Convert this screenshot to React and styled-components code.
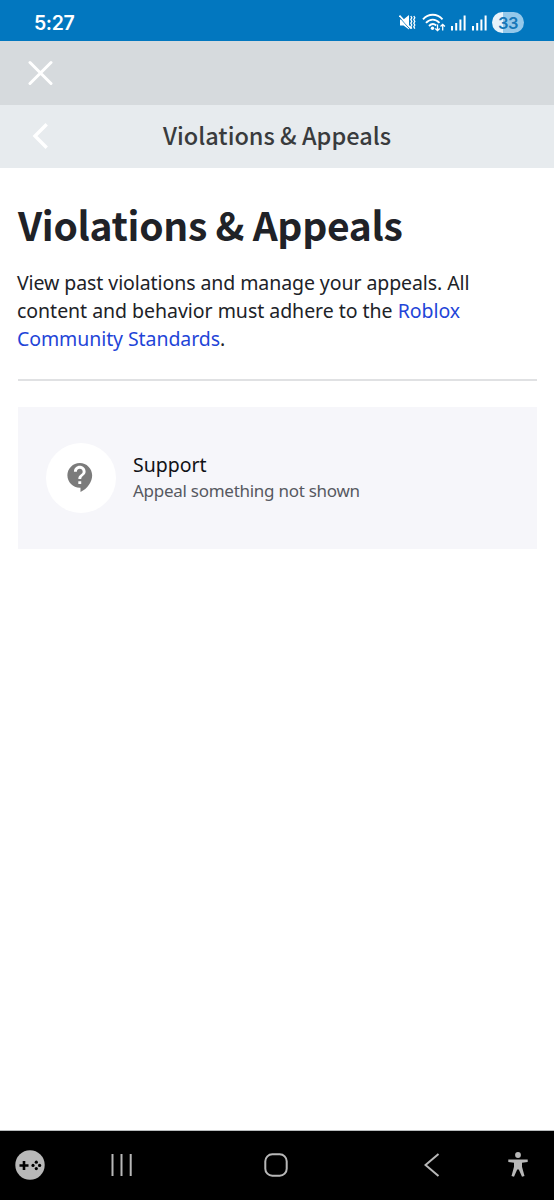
import React from 'react';
import styled, { createGlobalStyle } from 'styled-components';
import { MdContactSupport } from 'react-icons/md';

const App = () => {
    return (
        <Screen>
            <GlobalStyle />
            <StatusBar>
                <Clock>5:27</Clock>
                <StatusIcons>
                    <MutedIcon />
                    <WifiIcon />
                    <SignalIcon />
                    <SignalIcon />
                    <Battery>33</Battery>
                </StatusIcons>
            </StatusBar>
            <CloseBar>
                <IconButton aria-label="Close">
                    <svg width="26" height="26" viewBox="0 0 26 26" fill="none" stroke="#fff" strokeWidth="3" strokeLinecap="round">
                        <path d="M3 2.500l21 21M24 2.500l-21 21" />
                    </svg>
                </IconButton>
            </CloseBar>
            <TitleBar>
                <IconButton aria-label="Back">
                    <svg width="26" height="28" viewBox="0 0 26 28" fill="none" stroke="#fff" strokeWidth="3.4" strokeLinecap="square">
                        <path d="M18.500 3.500L8 14l10.500 10.500" />
                    </svg>
                </IconButton>
                <BarTitle>Violations &amp; Appeals</BarTitle>
            </TitleBar>
            <Content>
                <Heading>Violations &amp; Appeals</Heading>
                <Intro>
                    <Line $spacing="-0.08px">View past violations and manage your appeals. All</Line>
                    <Line $spacing="-0.03px">content and behavior must adhere to the <Link>Roblox</Link></Line>
                    <Line $spacing="-0.08px"><Link>Community Standards</Link>.</Line>
                </Intro>
                <Divider />
                <Card>
                    <IconCircle>
                        <MdContactSupport size={35} />
                    </IconCircle>
                    <CardText>
                        <CardTitle>Support</CardTitle>
                        <CardSubtitle>Appeal something not shown</CardSubtitle>
                    </CardText>
                </Card>
            </Content>
            <NavBar>
                <NavItem $width="60px"><GamepadIcon /></NavItem>
                <NavItem $width="123px">
                    <svg width="22" height="22" viewBox="0 0 22 22" stroke="#b8b8b8" strokeWidth="2">
                        <path d="M1.500 0v22M10.500 0v22M19.700 0v22" />
                    </svg>
                </NavItem>
                <NavItem $width="186px">
                    <svg width="24" height="24" viewBox="0 0 24 24" fill="none" stroke="#b8b8b8" strokeWidth="2">
                        <rect x="1.3" y="1.3" width="21.4" height="21.4" rx="7" />
                    </svg>
                </NavItem>
                <NavItem $width="126px">
                    <svg width="16" height="24" viewBox="0 0 16 24" fill="none" stroke="#b8b8b8" strokeWidth="2">
                        <path d="M14.5 1L1.500 12l13 11" />
                    </svg>
                </NavItem>
                <NavItem $width="46px"><AccessibilityIcon /></NavItem>
            </NavBar>
        </Screen>
    );
};

const MutedIcon = () => (
    <svg width="17" height="17" viewBox="0 0 17 17" fill="none">
        <path d="M1 5.500h3.500L10 1v14.500L4.500 11.500H1z" fill="#fff" />
        <path d="M0 2.800l12 13.500" stroke="#0277bf" strokeWidth="1" />
        <path d="M.5 1.500l11.500 13" stroke="#fff" strokeWidth="1.700" />
        <path d="M11.800 2l1 1.800-1 1.800 1 1.800-1 1.800 1 1.800-1 1.800 1 1.800M14.800 2l1 1.800-1 1.800 1 1.800-1 1.800 1 1.800-1 1.800 1 1.800" stroke="#fff" strokeWidth="1.300" />
    </svg>
);

const WifiIcon = () => (
    <svg width="24" height="19" viewBox="0 0 24 19" fill="none" stroke="#fff">
        <path d="M1 6.300C6.500.3 15 .3 20.500 6.300M4 9.800c4-4.300 9.500-4.300 13.500 0M7 13c2.300-2.300 5.200-2.300 7.200-.5" strokeWidth="1.900" />
        <circle cx="10.500" cy="15.300" r="1.700" fill="#fff" stroke="none" />
        <path d="M15.500 11.500v6M13.300 15.500l2.200 2.200 2.200-2.200M20.700 17.500v-6M18.500 13.500l2.200-2.200 2.200 2.200" strokeWidth="1.300" />
    </svg>
);

const SignalIcon = () => (
    <svg width="15" height="16" viewBox="0 0 15 16" fill="#fff">
        <rect x="0" y="11" width="2" height="4.500" />
        <rect x="4.200" y="8" width="2" height="7.500" />
        <rect x="8.400" y="4.500" width="2" height="11" />
        <rect x="12.600" y="0.500" width="2" height="15" />
    </svg>
);

const GamepadIcon = () => (
    <svg width="30" height="30" viewBox="0 0 30 30">
        <circle cx="15" cy="15" r="14.700" fill="#b8b8b8" />
        <path d="M4.500 15.500h9M9 11v9" stroke="#000" strokeWidth="2.600" />
        <circle cx="21.300" cy="12.200" r="1.600" />
        <circle cx="21.300" cy="18.600" r="1.600" />
        <circle cx="18" cy="15.400" r="1.600" />
        <circle cx="24.600" cy="15.400" r="1.600" />
    </svg>
);

const AccessibilityIcon = () => (
    <svg width="20" height="25" viewBox="0 0 20 25" fill="#b8b8b8">
        <circle cx="10" cy="3" r="2.900" />
        <path d="M.3 7.500h19.400v2.600l-5.700.7v4l2.500 9.200-2.500.8L10.800 17.500H9.200L6 24.800 3.500 24 6 14.800v-4l-5.700-.7z" />
    </svg>
);

const GlobalStyle = createGlobalStyle`
    body {
        margin: 0;
        background: #fff;
    }

    * {
        box-sizing: border-box;
    }

    svg {
        display: block;
        flex-shrink: 0;
    }
`;

const Screen = styled.div`
    display: flex;
    flex-direction: column;
    width: 554px;
    height: 1200px;
    background: #fff;
    font-family: "Noto Sans", "Open Sans", sans-serif;
    color: #202227;
`;

const StatusBar = styled.header`
    display: flex;
    align-items: center;
    justify-content: space-between;
    height: 41px;
    padding: 4px 30px 0 34px;
    background: #0277bf;
    color: #fff;
`;

const Clock = styled.span`
    font-family: Inter, Roboto, sans-serif;
    font-size: 19.5px;
    font-weight: 600;
    letter-spacing: -0.4px;
`;

const StatusIcons = styled.div`
    display: flex;
    align-items: center;
    gap: 5.5px;
`;

const Battery = styled.span`
    display: flex;
    align-items: center;
    justify-content: center;
    width: 32px;
    height: 21px;
    border-radius: 11px;
    background: linear-gradient(90deg, #e8f3fb 33%, #94c8ea 33%);
    color: #1677b8;
    font-family: Inter, Roboto, sans-serif;
    font-size: 16.5px;
    font-weight: 600;
    letter-spacing: -0.4px;
`;

const CloseBar = styled.div`
    display: flex;
    align-items: center;
    height: 64px;
    padding: 0 27px;
    background: #d6dadd;
`;

const TitleBar = styled.div`
    display: flex;
    align-items: center;
    height: 63px;
    padding: 0 27px 1px;
    background: #e7ebee;
`;

const IconButton = styled.button`
    padding: 0;
    border: 0;
    background: none;
`;

const BarTitle = styled.div`
    flex: 1;
    margin: 0 26px 2px 0;
    color: #393b3d;
    font-family: "Noto Sans CJK JP", "Noto Sans CJK SC", sans-serif;
    font-size: 23.5px;
    font-weight: 500;
    line-height: 30px;
    text-align: center;
    white-space: nowrap;
`;

const Content = styled.main`
    flex: 1;
    padding: 31px 17px 0 18px;
`;

const Heading = styled.h1`
    margin: 0;
    font-family: "Noto Sans CJK JP", "Noto Sans CJK SC", sans-serif;
    font-size: 39px;
    font-weight: 700;
    line-height: 50px;
    letter-spacing: -0.3px;
    white-space: nowrap;
`;

const Intro = styled.p`
    margin: 20px 0 0 -1px;
    font-size: 19.5px;
    line-height: 28px;
`;

const Line = styled.span`
    display: block;
    letter-spacing: ${({ $spacing }) => $spacing};
    white-space: nowrap;
`;

const Link = styled.a`
    color: #1f45d8;
`;

const Divider = styled.hr`
    height: 2px;
    margin: 26px 0 26px;
    border: 0;
    background: #e0e1e3;
`;

const Card = styled.section`
    display: flex;
    align-items: center;
    height: 142px;
    padding-left: 28px;
    background: #f6f6fa;
`;

const IconCircle = styled.div`
    display: flex;
    align-items: center;
    justify-content: center;
    width: 70px;
    height: 70px;
    padding: 0 1px 1px 0;
    border-radius: 50%;
    background: #fff;
    color: #7b7b7b;
`;

const CardText = styled.div`
    margin: 0 0 2px 17px;
    white-space: nowrap;
`;

const CardTitle = styled.div`
    color: #111216;
    font-size: 19.5px;
    line-height: 26px;
`;

const CardSubtitle = styled.div`
    color: #565961;
    font-size: 17px;
    line-height: 25px;
    letter-spacing: -0.27px;
`;

const NavBar = styled.nav`
    display: flex;
    align-items: center;
    height: 70px;
    padding-bottom: 2px;
    border-top: 1px solid #b9bcbd;
    background: #000;
`;

const NavItem = styled.div`
    display: flex;
    justify-content: center;
    width: ${({ $width }) => $width};
`;

export default App;
